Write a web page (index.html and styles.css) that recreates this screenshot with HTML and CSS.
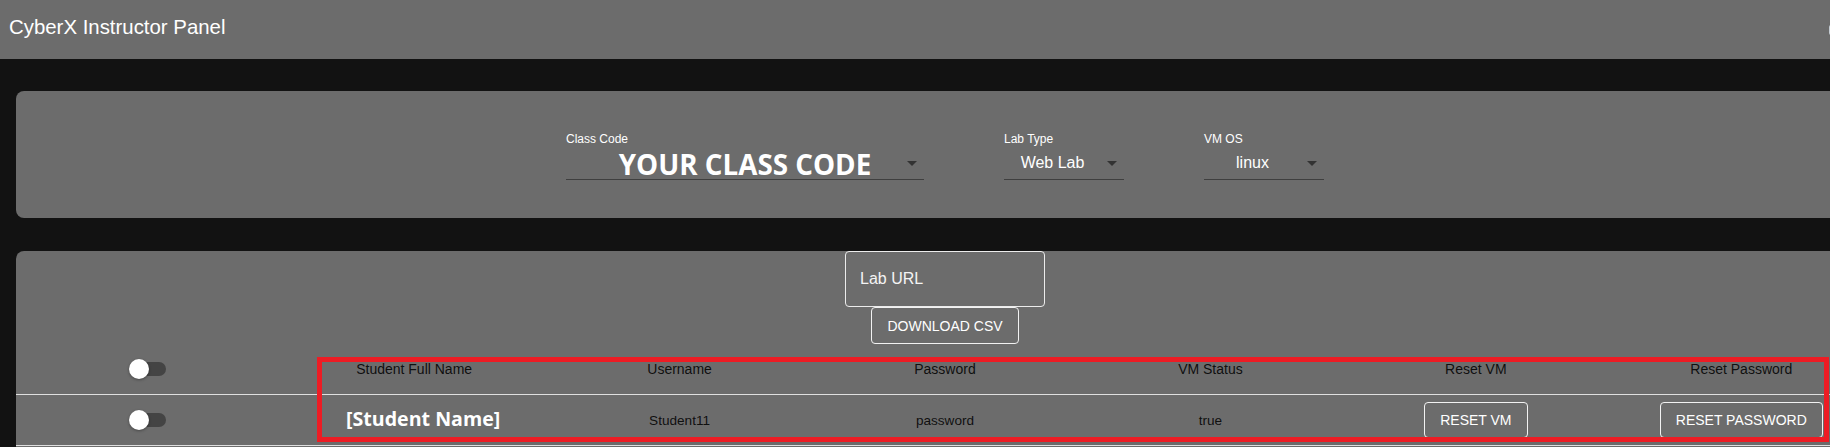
FILE: index.html
```html
<!DOCTYPE html>
<html lang="en">
<head>
<meta charset="utf-8">
<title>CyberX Instructor Panel</title>
<link rel="stylesheet" href="styles.css">
</head>
<body>
  <header class="appbar">
    <h1 class="title">CyberX Instructor Panel</h1>
    <span class="edge-mark"></span>
  </header>
  <main class="content">
    <section class="panel filters">
      <div class="select select-class">
        <label class="select-label">Class Code</label>
        <div class="select-value">
          <span class="select-text">YOUR CLASS CODE</span>
          <span class="arrow"></span>
        </div>
      </div>
      <div class="select select-small">
        <label class="select-label">Lab Type</label>
        <div class="select-value">
          <span class="select-text">Web Lab</span>
          <span class="arrow"></span>
        </div>
      </div>
      <div class="select select-small">
        <label class="select-label">VM OS</label>
        <div class="select-value">
          <span class="select-text">linux</span>
          <span class="arrow"></span>
        </div>
      </div>
    </section>

    <section class="panel roster">
      <div class="url-field">Lab URL</div>
      <button class="btn btn-download">Download CSV</button>
      <div class="grid-table">
        <div class="row head">
          <div class="cell"><span class="switch"><span class="thumb"></span></span></div>
          <div class="cell">Student Full Name</div>
          <div class="cell">Username</div>
          <div class="cell">Password</div>
          <div class="cell">VM Status</div>
          <div class="cell">Reset VM</div>
          <div class="cell">Reset Password</div>
        </div>
        <div class="row body-row">
          <div class="cell"><span class="switch"><span class="thumb"></span></span></div>
          <div class="cell name-cell">[Student Name]</div>
          <div class="cell">Student11</div>
          <div class="cell">password</div>
          <div class="cell">true</div>
          <div class="cell"><button class="btn btn-row">Reset VM</button></div>
          <div class="cell"><button class="btn btn-row">Reset Password</button></div>
        </div>
      </div>
      <div class="annotation"></div>
    </section>
  </main>
</body>
</html>
```
FILE: styles.css
```css
html, body {
  margin: 0;
  overflow: hidden;
  background: #121212;
}

body {
  width: 1890px;
  font-family: "Liberation Sans", Arial, sans-serif;
  color: #fff;
}

.appbar {
  height: 59px;
  box-sizing: border-box;
  background: #6c6c6c;
  display: flex;
  align-items: center;
  padding: 0 0 4px 9px;
}

.title {
  margin: 0;
  font-size: 20.4px;
  line-height: 23px;
  font-weight: 400;
  color: #fff;
}

.edge-mark {
  margin-left: auto;
  margin-right: 41px;
  width: 20px;
  height: 10px;
  margin-top: 4px;
  border-radius: 2px;
  background: #c4ccd3;
}

.content {
  padding: 32px 16px 0;
  display: flex;
  flex-direction: column;
  gap: 33px;
}

.panel {
  background: #6c6c6c;
  border-radius: 8px;
}

/* Filters */
.filters {
  display: flex;
  justify-content: center;
  gap: 80px;
  padding: 42px 0 38px;
}

.select {
  display: flex;
  flex-direction: column;
}

.select-class { width: 358px; }
.select-small { width: 120px; }

.select-label {
  font-size: 12px;
  line-height: 14px;
  height: 14px;
  margin-top: -1px;
  margin-bottom: 1px;
  color: #fff;
}

.select-value {
  height: 32px;
  display: flex;
  align-items: center;
  border-bottom: 1px solid #3f3f3f;
}

.select-text {
  flex: 1;
  text-align: center;
  font-size: 16px;
  line-height: 20px;
  color: #fff;
}

.select-class .select-text {
  font-family: "Open Sans", sans-serif;
  font-weight: 700;
  font-size: 27.8px;
  line-height: 32px;
  padding-left: 23px;
  margin-top: 1px;
}

.arrow {
  width: 0;
  height: 0;
  border-left: 5px solid transparent;
  border-right: 5px solid transparent;
  border-top: 5px solid #333;
  margin: 1px 7px 0 6px;
}

/* Roster */
.roster {
  position: relative;
  display: flex;
  flex-direction: column;
  align-items: center;
  padding-bottom: 20px;
}

.url-field {
  width: 200px;
  height: 56px;
  box-sizing: border-box;
  border: 1px solid #ececec;
  border-radius: 4px;
  padding: 0 14px;
  display: flex;
  align-items: center;
  font-size: 16px;
  color: #f4f4f4;
}

.btn {
  box-sizing: border-box;
  border: 1px solid #f2f2f2;
  border-radius: 4px;
  background: transparent;
  color: #fff;
  font-family: "Liberation Sans", Arial, sans-serif;
  font-size: 14px;
  text-transform: uppercase;
  padding: 0 15px;
  cursor: pointer;
}

.btn-download {
  height: 37px;
}

.btn-row {
  height: 36px;
  margin-top: -1px;
}

.grid-table {
  align-self: stretch;
}

.row {
  display: grid;
  grid-template-columns: repeat(7, 1fr);
  align-items: center;
  height: 51px;
  box-sizing: border-box;
  border-bottom: 1px solid #e0e0e0;
  font-size: 14px;
  color: rgba(0, 0, 0, 0.87);
}

.body-row {
  font-size: 13.6px;
}

.cell {
  display: flex;
  justify-content: center;
  align-items: center;
}

.name-cell {
  font-family: "Open Sans", sans-serif;
  font-weight: 700;
  font-size: 19.6px;
  color: #fff;
  padding-left: 18px;
  margin-top: -3px;
}

.switch {
  width: 34px;
  height: 14px;
  border-radius: 7px;
  background: #444;
  display: flex;
  align-items: center;
}

.thumb {
  width: 20px;
  height: 20px;
  border-radius: 50%;
  background: #fff;
  margin-left: -3px;
  box-shadow: 0 1px 3px rgba(0, 0, 0, 0.35);
}

.annotation {
  position: absolute;
  left: 301px;
  top: 106px;
  width: 1512px;
  height: 85px;
  box-sizing: border-box;
  border: 5px solid #ed1c24;
  pointer-events: none;
}
```
